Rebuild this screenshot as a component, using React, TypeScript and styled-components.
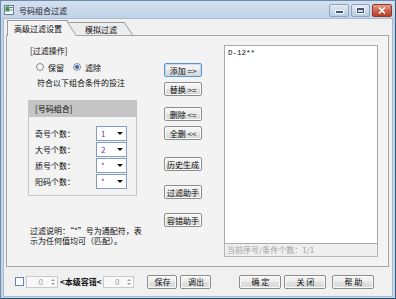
import styled, { createGlobalStyle } from "styled-components";

const GlobalStyle = createGlobalStyle`
  html, body { margin: 0; padding: 0; background: #ffffff; }
  body {
    font-family: "Noto Sans CJK SC", "Liberation Sans", sans-serif;
    font-size: 8px;
    color: #0a0a0a;
  }
`;

const Window = styled.div`
  width: 396px;
  height: 299px;
  box-sizing: border-box;
  display: flex;
  flex-direction: column;
  background: linear-gradient(#d3e0ef, #c0d2e7 18px, #c6d7eb);
  border: 1px solid #6f8cab;
  border-right-color: #2f5a7c;
  border-bottom-color: #1f4c68;
`;

const TitleBar = styled.div`
  height: 18px;
  display: flex;
  align-items: center;
  padding-left: 3px;
`;

const AppIcon = styled.svg`
  width: 10px;
  height: 10px;
  margin-right: 5px;
`;

const Title = styled.span`
  flex: 1;
  color: #1c2430;
`;

const Controls = styled.div`
  display: flex;
  align-items: center;
  gap: 2px;
  margin-right: 3px;
`;

const CtlButton = styled.div<{ $w: number }>`
  width: ${(p) => p.$w}px;
  height: 13px;
  box-sizing: border-box;
  border: 1px solid #8fa5bf;
  border-radius: 2px;
  background: linear-gradient(#e3ebf5, #ccdaea 50%, #bccde2);
  display: flex;
  align-items: center;
  justify-content: center;
`;

const MinGlyph = styled.span`
  width: 7px;
  height: 2px;
  margin-top: 3px;
  background: #3d5877;
  box-shadow: 0 0 0 1px #f4f8fc;
`;

const MaxGlyph = styled.span`
  width: 7px;
  height: 5px;
  box-sizing: border-box;
  border: 1px solid #3d5877;
  border-top-width: 2px;
  box-shadow: 0 0 0 1px #f4f8fc;
`;

const CloseButton = styled(CtlButton)`
  border-color: #8d3b2c;
  background: linear-gradient(#e5a08f, #d0634c 50%, #bb3d26);
`;

const Client = styled.div`
  flex: 1;
  margin: 0 3px 2px 3px;
  background: #f0f0f0;
  box-shadow: 0 0 0 1px #a9bbd0;
  display: flex;
  flex-direction: column;
  min-height: 0;
`;

const TabStrip = styled.div`
  height: 16px;
  display: flex;
  align-items: flex-end;
  padding-left: 3px;
`;

const Tab = styled.div<{ $active?: boolean; $w: number; $pl: number }>`
  position: relative;
  z-index: ${(p) => (p.$active ? 2 : 1)};
  width: ${(p) => p.$w}px;
  height: ${(p) => (p.$active ? 16 : 13)}px;
  margin-bottom: ${(p) => (p.$active ? -1 : 0)}px;
  box-sizing: border-box;
  padding-left: ${(p) => p.$pl}px;
  line-height: ${(p) => (p.$active ? 15 : 13)}px;
  white-space: nowrap;
  background: ${(p) => (p.$active ? "#f3f3f3" : "#ededed")};
  border-top: 1px solid #9a9a9a;
  border-left: 1px solid ${(p) => (p.$active ? "#9a9a9a" : "transparent")};

  &::after {
    content: "";
    position: absolute;
    z-index: -1;
    top: -1px;
    bottom: 0;
    right: -9px;
    width: 14px;
    background: inherit;
    border-top: 1px solid #9a9a9a;
    border-right: 1px solid #9a9a9a;
    transform: skewX(33deg);
    transform-origin: bottom;
  }
`;

const Panel = styled.div`
  height: 232px;
  margin: 0 3px 0 2px;
  box-sizing: border-box;
  padding: 9px 9px 9px 21px;
  border: 1px solid #a6a6a6;
  background: #f3f3f3;
  display: flex;
`;

const LeftCol = styled.div`
  width: 120px;
  display: flex;
  flex-direction: column;
`;

const SectionLabel = styled.div`
  margin-left: 2px;
  line-height: 11px;
`;

const RadioRow = styled.div`
  margin: 5px 0 0 8px;
  height: 12px;
  display: flex;
  align-items: center;
`;

const RadioOption = styled.label`
  display: flex;
  align-items: center;
  gap: 4px;
  margin-right: 9px;
`;

const RadioDot = styled.span<{ $checked?: boolean }>`
  width: 8px;
  height: 8px;
  box-sizing: border-box;
  border-radius: 50%;
  border: 1px solid #8d8d8d;
  background: radial-gradient(circle, #ffffff, #e2e2e2);
  display: flex;
  align-items: center;
  justify-content: center;

  &::after {
    content: "";
    width: 4px;
    height: 4px;
    border-radius: 50%;
    background: ${(p) => (p.$checked ? "#2c64c4" : "transparent")};
  }
`;

const Hint = styled.div`
  margin: 4px 0 0 9px;
  line-height: 11px;
`;

const GroupBox = styled.div`
  margin-top: 12px;
  width: 109px;
`;

const GroupHeader = styled.div`
  height: 17px;
  line-height: 17px;
  padding-left: 7px;
  background: #c5c5c5;
`;

const GroupBody = styled.div`
  border: 1px solid #c8c8c8;
  border-top: none;
  padding: 8px 0 6px 6px;
  display: flex;
  flex-direction: column;
`;

const FieldRow = styled.div`
  height: 16px;
  display: flex;
  align-items: center;
`;

const FieldLabel = styled.span`
  width: 61px;
`;

const Combo = styled.div`
  width: 31px;
  height: 15px;
  box-sizing: border-box;
  border: 1px solid #7f9dc3;
  background: #ffffff;
  display: flex;
  align-items: center;
  padding: 0 3px 0 4px;
  color: #6b3aa6;
`;

const ComboValue = styled.span`
  flex: 1;
`;

const ComboArrow = styled.span`
  width: 0;
  height: 0;
  border-left: 3px solid transparent;
  border-right: 3px solid transparent;
  border-top: 3px solid #111111;
`;

const Note = styled.div`
  margin: 30px 0 0 2px;
  line-height: 10px;
  white-space: nowrap;
`;

const MidCol = styled.div`
  width: 38px;
  margin-left: 16px;
  display: flex;
  flex-direction: column;
`;

const Button = styled.button<{ $w?: number; $mt?: number; $ml?: number; $default?: boolean }>`
  width: ${(p) => p.$w ?? 38}px;
  height: 14px;
  margin: ${(p) => p.$mt ?? 0}px 0 0 ${(p) => p.$ml ?? 0}px;
  padding: 0;
  box-sizing: border-box;
  font: inherit;
  color: #0a0a0a;
  white-space: nowrap;
  border: 1px solid ${(p) => (p.$default ? "#5b93cf" : "#8d8d8d")};
  border-radius: 2px;
  background: linear-gradient(#f7f7f7, #ececec 50%, #e0e0e0 51%, #d9d9d9);
  box-shadow: inset 0 0 0 1px ${(p) => (p.$default ? "#bfdcf6" : "#fbfbfb")};
  display: flex;
  align-items: center;
  justify-content: center;
`;

const ListCol = styled.div`
  width: 154px;
  margin-left: 22px;
  display: flex;
  flex-direction: column;
`;

const ListBox = styled.div`
  flex: 1;
  background: #ffffff;
  border: 1px solid #a9a9a9;
  padding: 3px 3px;
  font-family: "Liberation Mono", "DejaVu Sans Mono", monospace;
  font-size: 7.5px;
  line-height: 9px;
`;

const StatusLine = styled.div`
  height: 13px;
  box-sizing: border-box;
  border: 1px solid #b6b6b6;
  border-top: none;
  background: #efefef;
  color: #a3a3a3;
  line-height: 12px;
  padding-left: 2px;
`;

const BottomBar = styled.div`
  flex: 1;
  display: flex;
  align-items: center;
  padding-left: 11px;
`;

const CheckBox = styled.span`
  width: 9px;
  height: 9px;
  box-sizing: border-box;
  border: 1px solid #5f86b3;
  background: #ffffff;
`;

const Spin = styled.div<{ $w: number; $ml: number }>`
  width: ${(p) => p.$w}px;
  height: 12px;
  margin-left: ${(p) => p.$ml}px;
  box-sizing: border-box;
  border: 1px solid #cacaca;
  background: #f8f8f8;
  color: #9c9c9c;
  display: flex;
  align-items: center;
  justify-content: flex-end;
`;

const SpinValue = styled.span`
  padding-right: 6px;
`;

const SpinArrows = styled.span`
  width: 8px;
  display: flex;
  flex-direction: column;
  align-items: center;
  gap: 2px;

  &::before,
  &::after {
    content: "";
    width: 0;
    height: 0;
    border-left: 2px solid transparent;
    border-right: 2px solid transparent;
  }
  &::before {
    border-bottom: 2px solid #a0a0a0;
  }
  &::after {
    border-top: 2px solid #a0a0a0;
  }
`;

const RangeLabel = styled.span`
  margin-left: 2px;
  font-weight: bold;
`;

function Field({ label, value }: { label: string; value: string }) {
  return (
    <FieldRow>
      <FieldLabel>{label}</FieldLabel>
      <Combo>
        <ComboValue>{value}</ComboValue>
        <ComboArrow />
      </Combo>
    </FieldRow>
  );
}

function SpinBox({ w, ml }: { w: number; ml: number }) {
  return (
    <Spin $w={w} $ml={ml}>
      <SpinValue>0</SpinValue>
      <SpinArrows />
    </Spin>
  );
}

export default function App() {
  return (
    <>
      <GlobalStyle />
      <Window>
        <TitleBar>
          <AppIcon viewBox="0 0 10 10">
            <rect x="0.5" y="0.5" width="9" height="9" fill="#ffffff" stroke="#6a7d8f" />
            <rect x="1.5" y="1.5" width="4" height="5" fill="#3f8f52" />
            <rect x="6" y="2" width="2.5" height="1" fill="#4b6a8a" />
            <rect x="6" y="4.5" width="2.5" height="1" fill="#4b6a8a" />
          </AppIcon>
          <Title>号码组合过滤</Title>
          <Controls>
            <CtlButton $w={20}>
              <MinGlyph />
            </CtlButton>
            <CtlButton $w={19}>
              <MaxGlyph />
            </CtlButton>
            <CloseButton $w={20}>
              <svg width="8" height="7" viewBox="0 0 8 7">
                <path d="M1 0.5 L7 6.5 M7 0.5 L1 6.5" stroke="#ffffff" strokeWidth="1.6" />
              </svg>
            </CloseButton>
          </Controls>
        </TitleBar>
        <Client>
          <TabStrip>
            <Tab $active $w={61} $pl={6}>
              高级过滤设置
            </Tab>
            <Tab $w={56} $pl={16}>
              模拟过滤
            </Tab>
          </TabStrip>
          <Panel>
            <LeftCol>
              <SectionLabel>[过滤操作]</SectionLabel>
              <RadioRow>
                <RadioOption>
                  <RadioDot />
                  保留
                </RadioOption>
                <RadioOption>
                  <RadioDot $checked />
                  滤除
                </RadioOption>
              </RadioRow>
              <Hint>符合以下组合条件的投注</Hint>
              <GroupBox>
                <GroupHeader>[号码组合]</GroupHeader>
                <GroupBody>
                  <Field label="奇号个数：" value="1" />
                  <Field label="大号个数：" value="2" />
                  <Field label="质号个数：" value="*" />
                  <Field label="阳码个数：" value="*" />
                </GroupBody>
              </GroupBox>
              <Note>
                过滤说明：“*”号为通配符，表
                <br />
                示为任何值均可（匹配）。
              </Note>
            </LeftCol>
            <MidCol>
              <Button $mt={18} $default>
                添加 =&gt;
              </Button>
              <Button $mt={5}>替换 &gt;=</Button>
              <Button $mt={11}>删除 &lt;=</Button>
              <Button $mt={5}>全删 &lt;&lt;</Button>
              <Button $mt={17}>历史生成</Button>
              <Button $mt={14}>过滤助手</Button>
              <Button $mt={14}>容错助手</Button>
            </MidCol>
            <ListCol>
              <ListBox>D-12**</ListBox>
              <StatusLine>当前序号/条件个数：1/1</StatusLine>
            </ListCol>
          </Panel>
          <BottomBar>
            <CheckBox />
            <SpinBox w={32} ml={2} />
            <RangeLabel>&lt;本级容错&lt;</RangeLabel>
            <SpinBox w={31} ml={2} />
            <Button $w={30} $ml={13}>
              保存
            </Button>
            <Button $w={31} $ml={3}>
              调出
            </Button>
            <Button $w={42} $ml={28}>
              确 定
            </Button>
            <Button $w={42} $ml={3}>
              关 闭
            </Button>
            <Button $w={42} $ml={6}>
              帮 助
            </Button>
          </BottomBar>
        </Client>
      </Window>
    </>
  );
}
